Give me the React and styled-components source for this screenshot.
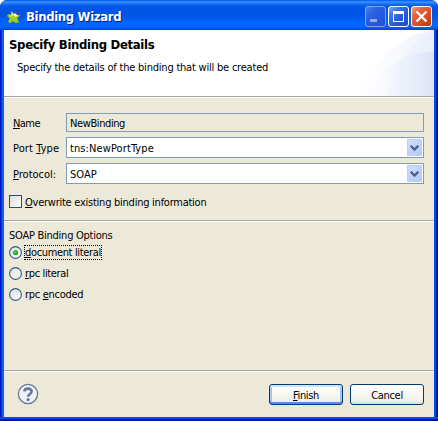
import React from 'react';
import styled, { createGlobalStyle, css } from 'styled-components';

const Global = createGlobalStyle`
  * { box-sizing: border-box; }
  body { margin: 0; background: #fff; overflow: hidden; }
`;

const Window = styled.div`
  width: 438px;
  height: 421px;
  display: flex;
  flex-direction: column;
  overflow: hidden;
  border-radius: 7px 7px 0 0;
  font: 11px/14px "DejaVu Sans Condensed", "DejaVu Sans", sans-serif;
  font-stretch: condensed;
  color: #000;
  background: linear-gradient(90deg, #0019cf 0, #0019cf 1px, #0831d9 1px, #0831d9 2px, #166aee 2px, #0855dd 4px, #0855dd 434px, #0048f0 434px, #0048f0 436px, #001fa8 436px, #00138c 438px);
`;

const TitleBar = styled.header`
  height: 30px;
  flex: none;
  display: flex;
  align-items: center;
  padding: 3px 6px 0 7px;
  background: linear-gradient(180deg, #0058e6 0, #3a93ff 2px, #1272f2 4px, #0358e8 6px, #0054e3 11px, #0055e5 16px, #0262fb 21px, #0066ff 26px, #005bf0 28px, #0040c8 30px);
`;

const Title = styled.h1`
  flex: 1;
  margin: 0 0 0 4px;
  font: bold 13px/18px "DejaVu Sans Condensed", "DejaVu Sans", sans-serif;
  font-stretch: condensed;
  letter-spacing: -0.35px;
  color: #fff;
  text-shadow: 1px 1px 0 #0a1883;
`;

const CaptionButtons = styled.div`
  display: flex;
  gap: 2px;
`;

const captionFill = {
  close: 'linear-gradient(135deg, #f0a080 0, #e4603c 30%, #dc4a20 65%, #c03408 100%)',
  normal: 'linear-gradient(135deg, #7ba6f8 0, #3a70ec 30%, #2358e0 65%, #1a50d8 100%)',
  dim: 'linear-gradient(135deg, #4a80ec 0, #2a5fe2 35%, #2052d8 100%)',
};

const CaptionButton = styled.button`
  width: 21px;
  height: 21px;
  padding: 0;
  border: 1px solid ${p => (p.$kind === 'dim' ? '#7ba3f2' : '#fff')};
  border-radius: 3px;
  background: ${p => captionFill[p.$kind]};
  svg { display: block; }
`;

const Body = styled.main`
  flex: 1;
  min-height: 0;
  margin: 0 4px;
  display: flex;
  flex-direction: column;
  background: #ece9d8;
`;

const Banner = styled.section`
  height: 66px;
  flex: none;
  display: flex;
  justify-content: space-between;
  background: #fff;
  > svg { display: block; flex: none; }
`;

const BannerText = styled.div`
  padding: 6px 0 0 5px;
  white-space: nowrap;
`;

const Heading = styled.h2`
  margin: 0;
  font: bold 13px/18px "DejaVu Sans Condensed", "DejaVu Sans", sans-serif;
  font-stretch: condensed;
  letter-spacing: -0.33px;
`;

const Description = styled.p`
  margin: 7px 0 0 8px;
  line-height: 14px;
  letter-spacing: -0.21px;
`;

const Rule = styled.div`
  height: 2px;
  flex: none;
  border-top: 1px solid #aca899;
  border-bottom: 1px solid #fff;
`;

const Form = styled.section`
  padding: 15px 10px 0 9px;
  display: grid;
  grid-template-columns: 53px 1fr;
  row-gap: 5px;
  align-items: center;
`;

const Text = styled.span`
  display: inline-block;
  padding-top: 2px;
  white-space: pre;
  letter-spacing: ${p => p.$track || 0}px;
`;

const Key = styled.u`
  text-decoration-thickness: 1px;
  text-underline-offset: 1px;
  text-decoration-skip-ink: none;
`;

const Field = styled.div`
  height: ${p => (p.$combo ? 21 : 19)}px;
  border: 1px solid #7f9db9;
  background: ${p => (p.$combo ? '#fff' : '#ece9d8')};
  padding: 0 1px 0 3px;
  display: flex;
  align-items: center;
  justify-content: space-between;
`;

const DropButton = styled.span`
  width: 15px;
  height: 17px;
  border-radius: 1px;
  background: linear-gradient(135deg, #d5dffc 0, #c1d3fb 50%, #adcbfa 100%);
  box-shadow: inset 0 0 0 1px #bccdf6;
  svg { display: block; }
`;

const Choice = styled.label`
  height: ${p => p.$height || 21}px;
  padding-left: 5px;
  display: flex;
  align-items: center;
`;

const Check = styled.span`
  width: 13px;
  height: 13px;
  margin: 0 3px 1px 0;
  border: 1px solid #1c5180;
  background: linear-gradient(135deg, #dcdcd7 0, #fff 100%);
`;

const Radio = styled.svg`
  display: block;
  width: 13px;
  height: 13px;
  margin-right: 2px;
`;

const ChoiceText = styled.span`
  height: 15px;
  line-height: 16px;
  padding: 0 1px;
  white-space: pre;
  letter-spacing: ${p => p.$track || 0}px;
  ${p => p.$focused && css`
    outline: 1px dotted #000;
    outline-offset: -1px;
  `}
`;

const Options = styled.section`
  flex: 1;
  padding-top: 5px;
`;

const OptionsTitle = styled.div`
  height: 15px;
  padding-left: 5px;
`;

const Footer = styled.footer`
  height: 45px;
  flex: none;
  display: flex;
  align-items: center;
  padding: 0 10px 1px 13px;
  gap: 7px;
  svg { display: block; margin: -1px auto 0 0; }
`;

const PushButton = styled.button`
  width: 74px;
  height: 21px;
  padding: 0;
  border: 1px solid #003c74;
  border-radius: 3px;
  background: linear-gradient(180deg, #fff 0, #f6f5f0 55%, #f0efe8 85%, #dcd7cb 100%);
  font: inherit;
  line-height: 17px;
  color: #000;
  ${p => p.$primary && css`
    box-shadow: inset 0 2px 0 #cee7ff, inset 0 -2px 0 #6982ee, inset 2px 0 0 #a9c1f4, inset -2px 0 0 #a9c1f4;
  `}
`;

const BottomEdge = styled.div`
  height: 4px;
  flex: none;
  background: linear-gradient(180deg, #0048f0 0, #0048f0 2px, #001fa8 2px, #00138c 4px);
`;

const Combo = ({ children, track }) => (
  <Field $combo>
    <Text $track={track}>{children}</Text>
    <DropButton>
      <svg width="15" height="17"><path d="M3.7 6.7 7.5 10.5 11.3 6.7" fill="none" stroke="#4d6185" strokeWidth="2.3" /></svg>
    </DropButton>
  </Field>
);

const RadioMark = ({ on }) => (
  <Radio viewBox="0 0 13 13">
    <defs>
      <linearGradient id="rf" x1="0" y1="0" x2="1" y2="1"><stop stopColor="#deded8" /><stop offset="1" stopColor="#fff" /></linearGradient>
      <radialGradient id="rd" cx=".4" cy=".4" r=".6"><stop stopColor="#55d551" /><stop offset="1" stopColor="#1a991a" /></radialGradient>
    </defs>
    <circle cx="6.5" cy="6.5" r="5.9" fill="url(#rf)" stroke="#2b5c87" strokeWidth="1.1" />
    {on && <circle cx="6.5" cy="6.5" r="2.6" fill="url(#rd)" />}
  </Radio>
);

export default function App() {
  return (
    <>
      <Global />
      <Window>
        <TitleBar>
          <svg width="15" height="16" viewBox="0 0 15 16">
            <path d="M4.5 2.5 6 5 12.8 6.5 10 9.3 11.6 13.3 8.6 13.8 6 12 2.8 14 1.4 12.7 3 9.4 .3 7 1 5.6 4 5.8Z" fill="#a6cf1b" stroke="#8cba18" strokeWidth=".7" />
            <path d="M4.8 3.2 5.8 6.4 3 7.3" fill="none" stroke="#e2ee88" strokeWidth="1.1" />
            <path d="M6 5.4 8.6 3.6 11 6 8.6 8Z" fill="#f5f9df" />
            <path d="M8.2 3.4 10.2 5.2 13.4 1.5" fill="none" stroke="#4a3cb8" strokeWidth="1.6" />
          </svg>
          <Title>Binding Wizard</Title>
          <CaptionButtons>
            <CaptionButton $kind="dim" aria-label="Minimize">
              <svg width="19" height="19"><path d="M4 12h7v3H4z" fill="#8faaf0" /></svg>
            </CaptionButton>
            <CaptionButton $kind="normal" aria-label="Maximize">
              <svg width="19" height="19"><path fillRule="evenodd" d="M4 4h11v11H4zM5 7h9v7H5z" fill="#fff" /></svg>
            </CaptionButton>
            <CaptionButton $kind="close" aria-label="Close">
              <svg width="19" height="19"><path d="M4.5 4.5 14.5 14.5M14.5 4.5 4.5 14.5" stroke="#fff" strokeWidth="2.3" /></svg>
            </CaptionButton>
          </CaptionButtons>
        </TitleBar>
        <Body>
          <Banner>
            <BannerText>
              <Heading>Specify Binding Details</Heading>
              <Description>Specify the details of the binding that will be created</Description>
            </BannerText>
            <svg width="74" height="66" viewBox="0 0 74 66">
              <defs>
                <linearGradient id="b1"><stop stopColor="#fff" /><stop offset=".3" stopColor="#fbfcfe" /><stop offset="1" stopColor="#ecf1fb" /></linearGradient>
                <linearGradient id="b2"><stop stopColor="#fff" stopOpacity="0" /><stop offset="1" stopColor="#dbe3f5" /></linearGradient>
              </defs>
              <path d="M0 66C10 34 36 6 74 0V66Z" fill="url(#b1)" />
              <path d="M28 66C34 38 48 14 74 1V66Z" fill="#e4ebf9" opacity=".35" />
              <path d="M0 66C16 42 42 24 74 21V66Z" fill="url(#b2)" />
            </svg>
          </Banner>
          <Rule />
          <Form>
            <Text $track={-0.55}><Key>N</Key>ame</Text>
            <Field><Text $track={-0.4}>NewBinding</Text></Field>
            <Text $track={0.1}>Port <Key>T</Key>ype</Text>
            <Combo track={0.1}>tns:NewPortType</Combo>
            <Text><Key>P</Key>rotocol:</Text>
            <Combo>SOAP</Combo>
          </Form>
          <Choice $height={36}>
            <Check />
            <Text $track={-0.25}><Key>O</Key>verwrite existing binding information</Text>
          </Choice>
          <Rule />
          <Options>
            <OptionsTitle><Text $track={-0.25}>SOAP Binding Options</Text></OptionsTitle>
            <Choice><RadioMark on /><ChoiceText $focused $track={-0.35}><Key>d</Key>ocument literal</ChoiceText></Choice>
            <Choice><RadioMark /><ChoiceText $track={-0.35}><Key>r</Key>pc literal</ChoiceText></Choice>
            <Choice><RadioMark /><ChoiceText $track={-0.3}>rpc <Key>e</Key>ncoded</ChoiceText></Choice>
          </Options>
          <Rule />
          <Footer>
            <svg width="22" height="22" viewBox="0 0 22 22">
              <circle cx="11" cy="11" r="9.6" fill="#f1f2f7" stroke="#66789d" strokeWidth="1.3" />
              <path d="M7.4 8.6C7.4 4.7 14.6 4.7 14.6 8.4 14.6 11 11.2 10.9 11.1 13.7" fill="none" stroke="#66789d" strokeWidth="2.6" />
              <circle cx="11.1" cy="16.6" r="1.6" fill="#66789d" />
            </svg>
            <PushButton $primary><Text $track={-0.35}><Key>F</Key>inish</Text></PushButton>
            <PushButton><Text $track={-0.3}>Cancel</Text></PushButton>
          </Footer>
        </Body>
        <BottomEdge />
      </Window>
    </>
  );
}
